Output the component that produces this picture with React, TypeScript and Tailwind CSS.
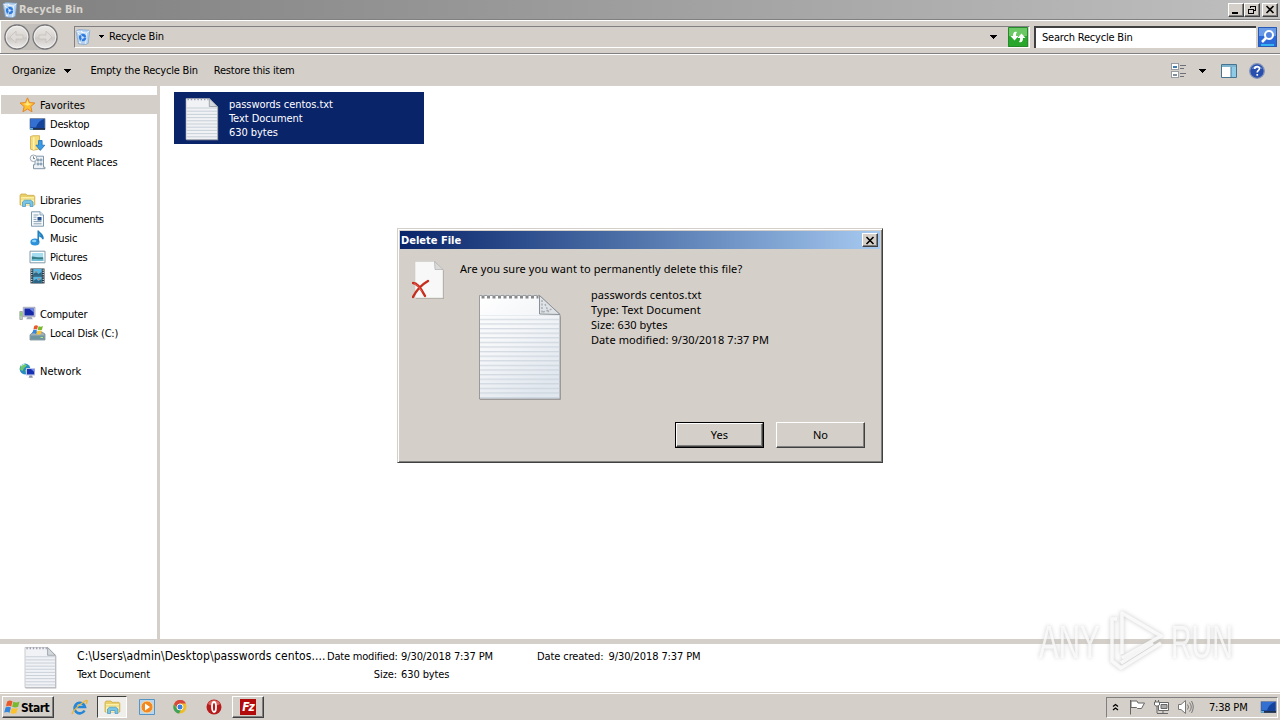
import type { ReactNode } from "react";

const raised =
  "border border-t-white border-l-white border-r-[#404040] border-b-[#404040] shadow-[inset_-1px_-1px_0_#808080]";

function BinIcon({ size = 16 }: { size?: number }) {
  return (
    <svg width={size} height={size} viewBox="0 0 16 16">
      <path d="M1 2 4 .5l10.800.8-1.600 13-3 1.400-6.800-.9Z" fill="#b5d2f0" stroke="#7fa2c9" strokeWidth=".7" />
      <path d="M1.500 2.300 11.500 4l3-2.300M11.500 4l-.9 11" fill="none" stroke="#edf6ff" strokeWidth=".9" />
      <path d="m3 3.500 1.400 2.200M6 2l2 1.700M4 13l2 1" stroke="#fff" />
      <circle cx="7.600" cy="8.500" r="2.500" fill="#d5e7fb" stroke="#2f7ade" strokeWidth="2.400" strokeDasharray="4.400 .8" />
    </svg>
  );
}

function FolderIcon() {
  return (
    <svg width="17" height="16" viewBox="0 0 17 16">
      <path d="M1 3.500 2 2h5l1 1.300h7l.8 1.200V13H1Z" fill="#e9cf69" stroke="#c8a540" strokeWidth=".7" />
      <path d="M2 5h13v8H2Z" fill="#fbf0a8" />
      <path d="M2 7h13" stroke="#e8d276" />
      <path d="M3.500 14.500V10l2-1.800h6.300L14 10v4.500h-3v-3H6.500v3Z" fill="#78c5e8" stroke="#4593bd" strokeWidth=".7" />
    </svg>
  );
}

function ScreenIcon() {
  return (
    <svg width="17" height="16" viewBox="0 0 17 16">
      <path d="M1 2.500h15v11H1Z" fill="#14439c" stroke="#79879d" strokeWidth=".8" />
      <path d="M1.500 3H15c-4 1.400-6.700 4-8 8.300H1.500Z" fill="#3470d2" />
      <path d="M1 12h15v1.800H1Z" fill="#21324f" />
      <path d="M1 12h3v1.800H1Z" fill="#63b4df" />
    </svg>
  );
}

function StarIcon() {
  return (
    <svg width="17" height="16" viewBox="0 0 17 16">
      <path
        d="m8.500.8 2 4.800 5.400.4-4.100 3.500 1.200 5.300-4.500-2.800-4.600 2.800 1.300-5.300L1 6l5.400-.4Z"
        fill="#ffc02e"
        stroke="#e5872a"
        strokeWidth="1"
      />
      <path d="m8.500 3 1.200 3.400 3.200.4-4.400 2-3.800-2 2.600-.4Z" fill="#ffe884" />
    </svg>
  );
}

function DownloadsIcon() {
  return (
    <svg width="17" height="16" viewBox="0 0 17 16">
      <path d="M1.500 1.500 4 .7h6.500V14l-6 1.200-3-1Z" fill="#f4dc7b" stroke="#cfa949" strokeWidth=".8" />
      <path d="M4.700 2.400v12.500" stroke="#fff3b5" strokeWidth="1.500" />
      <path d="M9.500 5.500h3.600v4.700h2.700l-4.500 5.200-4.400-5.200h2.600Z" fill="#3a9ce5" stroke="#2372b5" strokeWidth=".8" />
    </svg>
  );
}

function RecentIcon() {
  return (
    <svg width="17" height="16" viewBox="0 0 17 16">
      <path d="M6 2.200h8.500v11H16v1.500H4.500v-4H6Z" fill="#edf2f6" stroke="#8296a6" />
      <path d="M8 5h2v2H8zM11 5h2v2h-2zM8 9h2v2H8zM11 9h2v2h-2z" fill="#a8bac9" stroke="#6f8799" strokeWidth=".5" />
      <circle cx="4.500" cy="4.300" r="3.300" fill="#fafafa" stroke="#9cabb6" />
      <path d="M4.500 2.400v2.200H6" fill="none" stroke="#566673" strokeWidth=".8" />
    </svg>
  );
}

function DocumentsIcon() {
  return (
    <svg width="17" height="16" viewBox="0 0 17 16">
      <path d="M2.500.8H11L14.500 4v11.200h-12Z" fill="#f8fbfd" stroke="#7b98ae" />
      <path d="M11 .8V4h3.500" fill="#d9e8f0" stroke="#7b98ae" strokeWidth=".8" />
      <path d="M4.500 4h5M4.500 6.200h3M4.500 8.400h3M4.500 10.600h8M4.500 12.800h8" stroke="#88a0b3" />
      <path d="M8.500 6h4v3.500h-4z" fill="#274e8c" />
    </svg>
  );
}

function MusicIcon() {
  return (
    <svg width="17" height="16" viewBox="0 0 17 16">
      <ellipse cx="6" cy="12" rx="4.600" ry="3.500" fill="#2e92da" />
      <ellipse cx="5.200" cy="11" rx="2.200" ry="1.300" fill="#8cd4fa" />
      <path d="M9.200 12V.5c.5 3 5.700 3.500 4.700 8.700-.3-2-1.800-3-3.500-3.200" fill="#4caee6" stroke="#237fbe" strokeWidth="1.500" />
    </svg>
  );
}

function PicturesIcon() {
  return (
    <svg width="17" height="16" viewBox="0 0 17 16">
      <path d="M1 2.200h15v11.600H1Z" fill="#fff" stroke="#8199ac" />
      <path d="M2.800 4h11.400v8H2.800Z" fill="#a6dcf0" />
      <path d="M2.800 7.500c3-.5 4 1.400 11.400.7V12H2.800Z" fill="#367f88" />
      <path d="M2.800 10.500c5-1.400 8 .4 11.400-.4V12H2.800Z" fill="#71bfd5" />
    </svg>
  );
}

function VideosIcon() {
  return (
    <svg width="17" height="16" viewBox="0 0 17 16">
      <path d="M1.500.500h14v15h-14z" fill="#21333c" />
      <path d="M4.200 1h8.600v6.500H4.200zM4.200 8.400h8.600V15H4.200z" fill="#58b4e0" />
      <path d="m4.300 6 3-2 2 2 3.400-2v3.500H4.300zM4.300 13l3-2 2 2 3.400-2v4H4.300z" fill="#2b6484" />
      <path d="m6 4 1-1 1 1-1 1zM9 11l1-1 1 1-1 1z" fill="#d87847" />
      <path d="M2.800 1.500v14M14.200 1.500v14" stroke="#e4edf1" strokeWidth="1.200" strokeDasharray="1.200 1.100" />
    </svg>
  );
}

function ComputerIcon() {
  return (
    <svg width="17" height="16" viewBox="0 0 17 16">
      <path d="M.8 5.500h2.600v8H.8z" fill="#c4cdc4" stroke="#7e8a83" strokeWidth=".6" />
      <path d="M1.200 6.200h1.600v4H1.200z" fill="#7fcb65" />
      <path d="M4.300 1.300H16v9.500H4.300z" fill="#c9cee0" stroke="#8d94a9" strokeWidth=".7" />
      <path d="M5.500 2.500h9.300v7H5.500z" fill="#1528a8" />
      <path d="M10 2.500h4.800v4z" fill="#6f86e6" />
      <path d="M8.500 11h4l1.300 2.300H7.200z" fill="#9ea7b8" />
    </svg>
  );
}

function FlagPanes() {
  return (
    <>
      <path d="M3 2.400C5 1 6.500 1.400 8 2.300L6.800 7.100C5.100 6.100 3.600 6.100 1.800 7Z" fill="#e9592a" />
      <path d="M8.800 2.600c2 .9 3.700.9 5.800-.2l-1.300 4.900c-1.900 1-3.700.9-5.600 0Z" fill="#79b92f" />
      <path d="M1.500 8c1.700-.9 3.400-.8 5 0l-1.300 4.900c-1.500-1-3.100-.9-5-.1Z" fill="#3485dd" />
      <path d="M7.400 8.400c1.800.9 3.700.9 5.500 0l-1.200 4.800c-2 1-3.800.8-5.600-.1Z" fill="#fbc22c" />
    </>
  );
}

function DiskIcon() {
  return (
    <svg width="17" height="16" viewBox="0 0 17 16">
      <path d="m2 9 2-2h9l3 2v6H1V9.800Z" fill="#9fb0b9" stroke="#687f8a" strokeWidth=".7" />
      <path d="M1.500 10.500h14v4h-14z" fill="#6f949f" />
      <path d="M11.500 12.500h2.500" stroke="#a7ef80" />
      <g transform="translate(3 -.8) scale(.75)">
        <FlagPanes />
      </g>
    </svg>
  );
}

function NetworkIcon() {
  return (
    <svg width="17" height="16" viewBox="0 0 17 16">
      <circle cx="6" cy="6" r="5.400" fill="#278cc5" />
      <path d="M2 2.500c3-2 5-1.500 6 0L5 5 3.500 8 1 6.500ZM6 7l3-1 1 3-3 2Z" fill="#70c867" />
      <path d="M2 3c1-1 2-1.500 3.500-1.700" stroke="#c9f0ff" fill="none" />
      <path d="M7 5h9v7.500H7z" fill="#c0c9e7" />
      <path d="M8 6h7.200v5.400H8z" fill="#1730b4" />
      <path d="M12 6h3.200v3z" fill="#728ceb" />
      <path d="M10.500 12.500h2.600l.8 2.300H9.600z" fill="#8994a8" />
    </svg>
  );
}

function NotepadIcon({ width, height }: { width: number; height: number }) {
  return (
    <svg width={width} height={height} viewBox="0 0 34 44" preserveAspectRatio="none">
      <path d="M1.500 2.500h23l8.800 8V43.500H1.500Z" fill="#8d8d8d" opacity=".6" />
      <path d="M1 1.500h23.500l8 8V42.500H1Z" fill="#f0f2f5" stroke="#a9adb2" strokeWidth=".6" />
      <path
        d="M1.500 11h30.500M1.500 14.200h30.500M1.500 17.400h30.500M1.500 20.600h30.500M1.500 23.800h30.500M1.500 27h30.500M1.500 30.200h30.500M1.500 33.400h30.500M1.500 36.600h30.500M1.500 39.800h30.500"
        stroke="#c3ccd5"
        strokeWidth=".9"
      />
      <path d="M24.300 1.500v8h8Z" fill="#d3d8dd" stroke="#868d94" strokeWidth=".7" />
      <path d="M2.500 2.200h21" stroke="#9a9cab" strokeWidth="2" strokeDasharray="1.400 1.900" />
    </svg>
  );
}

function LargeNotepad() {
  return (
    <svg width="86" height="110" viewBox="0 0 86 110">
      <defs>
        <linearGradient id="paper" x1="0" y1="0" x2=".6" y2="1">
          <stop offset="0" stopColor="#fff" />
          <stop offset=".5" stopColor="#f3f5f8" />
          <stop offset="1" stopColor="#e0e7ee" />
        </linearGradient>
        <pattern id="ruled" width="6" height="4.600" patternUnits="userSpaceOnUse">
          <path d="M0 3.500h6" stroke="#c3ccd4" strokeWidth=".9" />
        </pattern>
      </defs>
      <path d="M3 4h60l21 20v83H3Z" fill="#8b8784" opacity=".55" />
      <path d="M2.500 2.500h60L83 21.500v84.500H2.500Z" fill="url(#paper)" stroke="#85898d" strokeWidth=".8" />
      <path d="M3 22h79.500v83H3Z" fill="url(#ruled)" />
      <path d="M62.500 2.500V21L83 21.500Z" fill="#dfe3e7" stroke="#8b9197" />
      <path d="M65 7v13M68 11l4 9M66 19l9-3" stroke="#a9afb5" strokeWidth="1.500" strokeDasharray="2 1.500" />
      <path d="M4.500 3.500h57" stroke="#86888a" strokeWidth="4" strokeDasharray="3 2.500" />
      <path d="M4.500 1.800h57" stroke="#d6d6d6" strokeWidth="1.500" strokeDasharray="3 2.500" />
    </svg>
  );
}

function DeleteFileIcon() {
  return (
    <svg width="34" height="40" viewBox="0 0 34 40">
      <path d="M4 1.500h19l9 8v28.500H4Z" fill="#9c9792" opacity=".7" />
      <path d="M3 .5h19.500l8.500 8v28.500H3Z" fill="#f8f8f8" stroke="#cfccc8" strokeWidth=".6" />
      <path d="M22.500.5 23 8.500h8Z" fill="#dadada" stroke="#adadad" strokeWidth=".7" />
      <path d="M1 22c3 0 8 5 12 13M16 20C9 24 4 30 1 36" fill="none" stroke="#c72c1d" strokeWidth="2.400" strokeLinecap="round" />
      <path d="M2 22.500c3 1 5 4 8 8" fill="none" stroke="#ec7767" strokeWidth=".8" />
    </svg>
  );
}

function Caret() {
  return (
    <svg width="7" height="4" viewBox="0 0 7 4" shapeRendering="crispEdges">
      <path d="M0 0h7L3.500 4Z" fill="#000" />
    </svg>
  );
}

function NavButton({ back }: { back?: boolean }) {
  return (
    <svg width="26" height="26" viewBox="0 0 26 26">
      <defs>
        <linearGradient id="nav" x1="0" y1="0" x2="0" y2="1">
          <stop offset="0" stopColor="#eceae8" />
          <stop offset=".48" stopColor="#d8d5d1" />
          <stop offset=".55" stopColor="#cbc8c5" />
          <stop offset="1" stopColor="#efedeb" />
        </linearGradient>
      </defs>
      <circle cx="13" cy="13" r="12" fill="url(#nav)" stroke="#77767a" strokeWidth="1.300" />
      <circle cx="13" cy="13" r="10.800" fill="none" stroke="#f6f5f4" strokeWidth=".8" />
      <path
        d="M6 13l6-6v4h7v4h-7v4Z"
        transform={back ? undefined : "translate(26 0) scale(-1 1)"}
        fill="#dedbd8"
        stroke="#c5c1bd"
        strokeWidth=".8"
      />
    </svg>
  );
}

function CaptionButton({ children }: { children: ReactNode }) {
  return (
    <button className={`grid h-[14px] w-4 place-items-center bg-[#d4cfc8] ${raised}`}>
      <svg width="10" height="9" viewBox="0 0 10 9" fill="none" stroke="#000" shapeRendering="crispEdges">
        {children}
      </svg>
    </button>
  );
}

function CloseGlyph() {
  return <path d="m1.500 1 7 7m0-7-7 7" strokeWidth="1.600" shapeRendering="auto" />;
}

function NavItem({
  icon,
  label,
  root,
  active,
  tracking = "",
}: {
  icon: ReactNode;
  label: string;
  root?: boolean;
  active?: boolean;
  tracking?: string;
}) {
  return (
    <div
      className={`ml-px flex h-[19px] items-center gap-1 ${root ? "pl-[18px]" : "pl-7"} ${active ? "bg-[#d4cfc8]" : ""}`}
    >
      {icon}
      <span className={`pt-[2px] ${tracking}`}>{label}</span>
    </div>
  );
}

function TitleBar() {
  return (
    <div className="flex h-[19px] shrink-0 items-center bg-linear-to-r from-[#808080] to-[#bfbfbf] pr-[2px] pl-[2px]">
      <BinIcon />
      <span className="ml-px flex-1 pt-px font-bold tracking-[0px] text-[#d8d4ce]">Recycle Bin</span>
      <CaptionButton>
        <path d="M1 7.500h6" strokeWidth="2" />
      </CaptionButton>
      <CaptionButton>
        <path d="M3.500 3V1h5v4h-2M3 1.500h6M1.500 4.500h5v4h-5zM1 4.500h6" />
      </CaptionButton>
      <div className="ml-[2px] flex">
        <CaptionButton>
          <CloseGlyph />
        </CaptionButton>
      </div>
    </div>
  );
}

function AddressBar() {
  return (
    <div className="flex h-[35px] shrink-0 items-center border-t border-b border-t-[#808080] border-b-[#808080] pl-1 shadow-[inset_0_1px_0_#fff,0_1px_0_#fff,inset_1px_0_0_#fff]">
      <div className="flex h-[26px] items-center gap-[2px] rounded-full bg-[#c3bfbb]">
        <NavButton back />
        <NavButton />
      </div>
      <div className="ml-4 flex h-[22px] w-[956px] items-center border border-t-[#808080] border-r-white border-b-white border-l-[#808080]">
        <BinIcon />
        <svg width="5" height="3" viewBox="0 0 5 3" shapeRendering="crispEdges" className="ml-2">
          <path d="M0 0h5L2.500 3Z" />
        </svg>
        <span className="ml-[5px] flex-1">Recycle Bin</span>
        <Caret />
        <svg width="20" height="20" viewBox="0 0 20 20" className="mr-px ml-[11px]">
          <path d="M0 0h20v20H0z" fill="#29a72c" />
          <path d="M0 0h20v9H0z" fill="#6bc864" />
          <path d="M.500.500h19v19H.500Z" fill="none" stroke="#278a2a" />
          <path
            d="M9 5c-3-1-4 1-4 4H2.500l4 4.500 4-4.500H8c0-2 0-2.500 1-4ZM11 15c3 1 4-1 4-4h2.500l-4-4.500-4 4.500H12c0 2 0 2.500-1 4Z"
            fill="#fff"
          />
        </svg>
      </div>
      <div className="ml-1 flex h-[22px] w-[222px] items-center border-t-2 border-l-2 border-[#404040] bg-white pl-[6px]">
        <span>Search Recycle Bin</span>
      </div>
      <svg width="19" height="20" viewBox="0 0 19 20" className="ml-[2px]">
        <path d="M0 0h19v20H0z" fill="#2b68d8" />
        <path d="M0 0h19v9H0z" fill="#699be9" />
        <path d="M.500.500h18v19H.500Z" fill="none" stroke="#2859b5" />
        <path d="M3 18h13" stroke="#35b1f2" strokeWidth="2" />
        <circle cx="11" cy="8" r="4" fill="#4f83dd" stroke="#fff" strokeWidth="2" />
        <path d="m8 11-4 4" stroke="#fff" strokeWidth="2.500" />
      </svg>
    </div>
  );
}

function CommandBar() {
  return (
    <div className="flex h-8 shrink-0 items-center pt-px pl-3">
      <span className="tracking-[-0.1px]">Organize</span>
      <div className="ml-2">
        <Caret />
      </div>
      <span className="ml-5">Empty the Recycle Bin</span>
      <span className="ml-4 flex-1">Restore this item</span>
      <svg width="17" height="16" viewBox="0 0 17 16" shapeRendering="crispEdges">
        <path d="M1.500.500h7v6h-7zM1.500 8.500h7v6h-7z" fill="#fff" stroke="#999da3" />
        <path d="M3 3h4v2H3z" fill="#3d7bb0" />
        <path d="M3 11h4v2H3z" fill="#7f8f9b" />
        <path d="M10 2.500h6M10 5.500h4M10 10.500h6M10 13.500h4" stroke="#6d7076" />
      </svg>
      <div className="ml-3">
        <Caret />
      </div>
      <svg width="16" height="14" viewBox="0 0 16 14" className="ml-[15px]">
        <path d="M.500.500h15v13H.500Z" fill="#fff" stroke="#44748f" />
        <path d="M1 1h14v2H1z" fill="#7eb4d0" />
        <path d="M10 3h5v10h-5z" fill="#8fcbe7" />
        <path d="M10 3v10" stroke="#477b97" />
      </svg>
      <svg width="16" height="16" viewBox="0 0 16 16" className="mr-[15px] ml-3">
        <circle cx="8" cy="8" r="7.300" fill="#284fae" stroke="#8293b9" strokeWidth="1.300" />
        <path d="M2.500 6a6 5 0 0 1 11 0c-4-1-7-1-11 0Z" fill="#7393dc" />
        <path d="M5.700 6c0-3.200 4.800-3 4.800-.5 0 1.800-2.300 1.800-2.300 4" fill="none" stroke="#fff" strokeWidth="1.600" />
        <path d="M7.400 11h1.700v1.700H7.400z" fill="#fff" />
      </svg>
    </div>
  );
}

function Sidebar() {
  return (
    <nav className="flex w-[157px] shrink-0 flex-col pt-[9px]">
      <NavItem root active icon={<StarIcon />} label="Favorites" tracking="tracking-[0.05px]" />
      <NavItem icon={<ScreenIcon />} label="Desktop" />
      <NavItem icon={<DownloadsIcon />} label="Downloads" />
      <NavItem icon={<RecentIcon />} label="Recent Places" tracking="tracking-[-0.1px]" />
      <div className="h-[19px]" />
      <NavItem root icon={<FolderIcon />} label="Libraries" />
      <NavItem icon={<DocumentsIcon />} label="Documents" tracking="tracking-[-0.3px]" />
      <NavItem icon={<MusicIcon />} label="Music" />
      <NavItem icon={<PicturesIcon />} label="Pictures" />
      <NavItem icon={<VideosIcon />} label="Videos" />
      <div className="h-[19px]" />
      <NavItem root icon={<ComputerIcon />} label="Computer" tracking="tracking-[-0.25px]" />
      <NavItem icon={<DiskIcon />} label="Local Disk (C:)" />
      <div className="h-[19px]" />
      <NavItem root icon={<NetworkIcon />} label="Network" tracking="tracking-[0px]" />
    </nav>
  );
}

function DetailsPane() {
  return (
    <div className="flex h-[48px] shrink-0 bg-white pl-6 leading-[18px] tracking-[-0.1px] whitespace-nowrap">
      <div className="pt-[2px]">
        <NotepadIcon width={33} height={43} />
      </div>
      <div className="ml-5 w-[250px] pt-[3px]">
        <div className="pb-px text-[12px] tracking-[0.1px]">C:\Users\admin\Desktop\passwords centos....</div>
        <div>Text Document</div>
      </div>
      <div className="w-[70px] pt-1 text-right">
        <div className="tracking-[-0.2px]">Date modified:</div>
        <div>Size:</div>
      </div>
      <div className="ml-1 w-[136px] pt-1">
        <div>9/30/2018 7:37 PM</div>
        <div>630 bytes</div>
      </div>
      <div className="flex gap-[5px] pt-1">
        <span>Date created:</span>
        <span>9/30/2018 7:37 PM</span>
      </div>
    </div>
  );
}

function Taskbar() {
  return (
    <div className="flex h-[27px] shrink-0 items-center border-t border-white bg-[#d4cfc8] pl-[2px]">
      <button className={`flex h-[22px] w-[52px] items-center pl-px ${raised}`}>
        <svg width="17" height="17" viewBox="0 0 16 16">
          <FlagPanes />
        </svg>
        <span className="pt-px text-[12px] font-bold tracking-[-0.5px]">Start</span>
      </button>
      <svg width="17" height="17" viewBox="0 0 17 17" className="ml-[17px]">
        <path d="M13.500 11.500A5.300 5.300 0 1 1 14 8H5" fill="none" stroke="#2585d7" strokeWidth="2.600" />
        <path d="M2 14C-1 17 4 8 14 2c3-1.500 2.500.5 1 3" fill="none" stroke="#eab83a" strokeWidth="1.300" />
      </svg>
      <div className="ml-[9px] flex h-[22px] w-[30px] items-center justify-center border border-t-[#404040] border-r-white border-b-white border-l-[#404040] bg-[#f0eeeb]">
        <FolderIcon />
      </div>
      <svg width="16" height="16" viewBox="0 0 16 16" className="ml-3">
        <path d="M.500.500h15v15H.500Z" fill="#b8d6ee" stroke="#5594c7" />
        <circle cx="8" cy="8" r="6" fill="#f28920" stroke="#fad69c" />
        <path d="m6 4.500 5 3.500-5 3.500Z" fill="#fff" />
      </svg>
      <svg width="14" height="14" viewBox="0 0 14 14" className="ml-[18px]">
        <circle cx="7" cy="7" r="6.500" fill="#f0bd28" />
        <path d="M1 4a6.500 6.500 0 0 1 12-.5H7L4 8Z" fill="#d9473b" />
        <path d="m1 4 3.500 6L8 10l-2 3.500A6.500 6.500 0 0 1 1 4Z" fill="#3da35a" />
        <circle cx="7" cy="7" r="3" fill="#397fdd" stroke="#f5f5f5" />
      </svg>
      <svg width="16" height="16" viewBox="0 0 16 16" className="ml-[19px]">
        <circle cx="8" cy="8" r="7.500" fill="#b71c1c" />
        <path d="M2 5c2-5 10-5 12 0-3 2-9 2-12 0Z" fill="#dd6560" />
        <ellipse cx="8" cy="8" rx="2" ry="5" fill="#b71c1c" stroke="#fff" strokeWidth="1.800" />
      </svg>
      <div className={`ml-[10px] grid h-[22px] w-8 place-items-center ${raised}`}>
        <div className="grid h-4 w-4 place-items-center bg-[#b30b0b] text-[12px] leading-none font-bold tracking-[-1px] text-white italic">
          Fz
        </div>
      </div>
      <div className="flex-1" />
      <div className="mr-[2px] flex h-[21px] w-[172px] items-center border border-t-[#808080] border-r-white border-b-white border-l-[#808080] pl-[5px]">
        <svg width="7" height="8" viewBox="0 0 7 8" fill="none" stroke="#000" strokeWidth="1.300">
          <path d="m1 3.500 2.500-2 2.500 2M1 7l2.500-2L6 7" />
        </svg>
        <svg width="17" height="16" viewBox="0 0 17 16" className="ml-[10px]" fill="#fff" stroke="#666">
          <path d="M1.500 1v14.500M2 2h6l1 2h6.500l-3 5.500H8.500l-1-1H2Z" />
        </svg>
        <svg width="17" height="16" viewBox="0 0 17 16" className="ml-[7px]" fill="#fff" stroke="#666">
          <path d="M5.500 3.500h10v8h-10zM4 14.500h11M10 11.500v3" />
          <path d="M8 5.500h6v4H8z" fill="#aaa" />
          <path d="M1.500 3h5v3l-1.500 1H3L1.500 6ZM2.500 3V1M5.500 3V1M4 7v7" />
        </svg>
        <svg width="17" height="16" viewBox="0 0 17 16" className="ml-[7px]" fill="none" stroke="#777">
          <path d="M1.500 5.500H4L8.500 1.500v13L4 10.500H1.500Z" fill="#fff" />
          <path d="M10.500 5.500q2 2.500 0 5M12.500 3.500q3.500 4.500 0 9M14.500 2q3.500 6 0 12" />
        </svg>
        <span className="ml-[15px] flex-1 pt-px">7:38 PM</span>
        <ScreenIcon />
      </div>
    </div>
  );
}

function DeleteDialog() {
  return (
    <div className="absolute top-[228px] left-[397px] flex h-[235px] w-[486px] flex-col border border-t-[#d4cfc8] border-r-[#404040] border-b-[#404040] border-l-[#d4cfc8] bg-[#d4cfc8] p-[2px] font-['Noto_Sans'] text-[11px] tracking-[0.08px] shadow-[inset_1px_1px_0_#fff,inset_-1px_-1px_0_#808080]">
      <div className="flex h-[18px] shrink-0 items-center justify-between bg-linear-to-r from-[#0a246a] to-[#a6caf0] pr-[2px] pl-px">
        <span className="pt-px font-['DejaVu_Sans_Condensed'] font-bold tracking-[0px] text-white">Delete File</span>
        <CaptionButton>
          <CloseGlyph />
        </CaptionButton>
      </div>
      <div className="flex flex-1 pt-3 pl-3">
        <DeleteFileIcon />
        <div className="ml-[14px]">
          <div className="leading-4">Are you sure you want to permanently delete this file?</div>
          <div className="mt-4 flex pl-[17px]">
            <LargeNotepad />
            <div className="-mt-[6px] ml-7 leading-[15px]">
              <div>passwords centos.txt</div>
              <div>Type: Text Document</div>
              <div>Size: 630 bytes</div>
              <div>Date modified: 9/30/2018 7:37 PM</div>
            </div>
          </div>
        </div>
      </div>
      <div className="mb-3 flex justify-end gap-3 pr-[15px]">
        <div className="h-[26px] w-[89px] border border-black">
          <button className={`h-full w-full ${raised}`}>Yes</button>
        </div>
        <button className={`h-[26px] w-[89px] ${raised}`}>No</button>
      </div>
    </div>
  );
}

function Watermark() {
  return (
    <div className="absolute top-[606px] left-[1039px] flex h-[70px] w-[194px] items-center justify-between font-['Liberation_Sans'] text-[46px] tracking-normal text-white/75 [filter:drop-shadow(0_0_2px_#bbb)]">
      <span className="w-[62px] origin-left scale-x-[0.64] pt-[2px]">ANY</span>
      <svg
        width="58"
        height="66"
        viewBox="0 0 58 66"
        fill="none"
        stroke="#fff"
        strokeWidth="3.500"
        strokeOpacity=".8"
        strokeLinejoin="round"
        className="shrink-0"
      >
        <path d="M15 46V5L54 28 15 50M10 11H5v42l9 7L54 35M14 55l32-20" />
      </svg>
      <span className="w-[62px] origin-left scale-x-[0.62] pt-[2px]">RUN</span>
    </div>
  );
}

export default function App() {
  return (
    <div className="relative flex h-[720px] w-[1280px] flex-col overflow-hidden bg-[#d4cfc8] font-['DejaVu_Sans_Condensed','DejaVu_Sans',sans-serif] text-[11px] leading-[14px] tracking-[-0.2px] text-black">
      <TitleBar />
      <AddressBar />
      <CommandBar />
      <div className="flex flex-1 bg-white">
        <Sidebar />
        <div className="w-[3px] bg-[#d4cfc8]" />
        <main className="flex-1 pt-[6px] pl-[14px]">
          <div className="flex h-[52px] w-[250px] bg-[#0a246a] pt-[5px] pl-[11px] text-white">
            <NotepadIcon width={34} height={44} />
            <div className="ml-[10px] pt-px tracking-[-0.05px]">
              <div>passwords centos.txt</div>
              <div>Text Document</div>
              <div>630 bytes</div>
            </div>
          </div>
        </main>
      </div>
      <div className="h-[5px] shrink-0 bg-[#d4cfc8]" />
      <DetailsPane />
      <div className="h-px shrink-0 bg-[#d4cfc8]" />
      <Taskbar />
      <DeleteDialog />
      <Watermark />
    </div>
  );
}
